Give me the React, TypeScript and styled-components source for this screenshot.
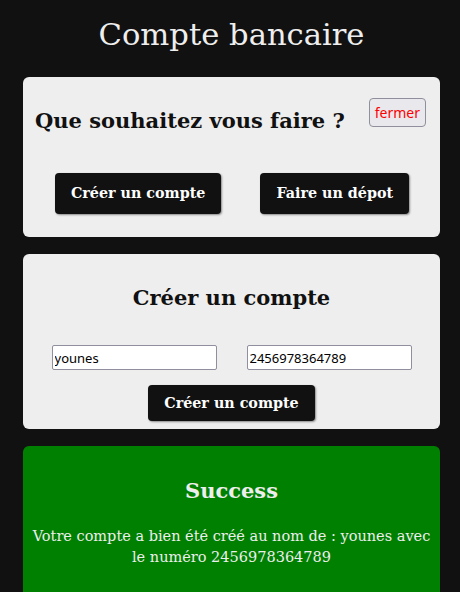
import React from "react";
import styled, { createGlobalStyle } from "styled-components";

const GlobalStyle = createGlobalStyle`
  html, body {
    margin: 0;
    padding: 0;
    background: #111111;
  }
  body {
    font-family: "DejaVu Serif", serif;
  }
  * { box-sizing: border-box; }
`;

const Page = styled.div`
  padding: 15px 20px 0 23px;
  display: flex;
  flex-direction: column;
  color: #eeeeee;
`;

const Title = styled.h1`
  margin: 0 0 22px;
  font-family: "DejaVu Serif", serif;
  font-weight: normal;
  font-size: 30.6px;
  line-height: 40px;
  text-align: center;
  color: #eeeeee;
`;

const Card = styled.section<{ $tone?: "light" | "success" }>`
  background: ${(p) => (p.$tone === "success" ? "#008000" : "#eeeeee")};
  color: ${(p) => (p.$tone === "success" ? "#eeeeee" : "#111111")};
  border-radius: 6px;
  display: flex;
  flex-direction: column;
  margin-bottom: 17px;
`;

const MenuCard = styled(Card)`
  padding: 21px 14px 23px 12px;
`;

const FormCard = styled(Card)`
  padding: 28px 12px 8px;
  align-items: center;
`;

const SuccessCard = styled(Card)`
  padding: 29px 6px 30px;
  align-items: center;
  margin-bottom: 0;
`;

const Header = styled.div`
  display: flex;
  justify-content: space-between;
  align-items: flex-start;
`;

const Heading = styled.h2`
  margin: 0;
  font-family: "DejaVu Serif", serif;
  font-size: 21px;
  line-height: 32px;
  font-weight: 700;
`;

const MenuHeading = styled(Heading)`
  margin-top: 7px;
`;

const CloseButton = styled.button`
  font-family: "Noto Sans", sans-serif;
  font-size: 14px;
  line-height: 21px;
  color: #ff0000;
  background: #e9e9ed;
  border: 1px solid #8f8f9d;
  border-radius: 4px;
  padding: 3px 5px 3px;
  cursor: pointer;
`;

const ButtonRow = styled.div`
  display: flex;
  justify-content: center;
  gap: 39px;
  margin-top: 36px;
  padding-left: 3px;
`;

const DarkButton = styled.button<{ $tall?: boolean }>`
  font-family: "DejaVu Serif", serif;
  font-weight: 700;
  font-size: 14.3px;
  line-height: 21px;
  color: #ffffff;
  background: #111111;
  border: none;
  border-radius: 4px;
  box-shadow: 1px 1px 2px #8a8a8a;
  padding: ${(p) => (p.$tall ? "10px 16px" : "8px 16px 7px")};
  cursor: pointer;
`;

const InputRow = styled.div`
  display: flex;
  justify-content: center;
  gap: 30px;
  margin-top: 31px;
  margin-bottom: 15px;
`;

const Field = styled.input`
  width: 165px;
  height: 25px;
  font-family: "Noto Sans", sans-serif;
  font-size: 13px;
  color: #000000;
  background: #ffffff;
  border: 1px solid #8f8f9d;
  border-radius: 2px;
  padding: 1px 2px;
  outline: none;
`;

const Message = styled.p`
  margin: 19px 0 0;
  font-family: "DejaVu Serif", serif;
  font-size: 14.5px;
  line-height: 21px;
  text-align: center;
`;

export default function App() {
  return (
    <>
      <GlobalStyle />
      <Page>
        <Title>Compte bancaire</Title>

        <MenuCard>
          <Header>
            <MenuHeading>Que souhaitez vous faire ?</MenuHeading>
            <CloseButton>fermer</CloseButton>
          </Header>
          <ButtonRow>
            <DarkButton $tall>Créer un compte</DarkButton>
            <DarkButton $tall>Faire un dépot</DarkButton>
          </ButtonRow>
        </MenuCard>

        <FormCard>
          <Heading>Créer un compte</Heading>
          <InputRow>
            <Field defaultValue="younes" />
            <Field defaultValue="2456978364789" />
          </InputRow>
          <DarkButton>Créer un compte</DarkButton>
        </FormCard>

        <SuccessCard $tone="success">
          <Heading>Success</Heading>
          <Message>
            Votre compte a bien été créé au nom de : younes avec le numéro
            2456978364789
          </Message>
        </SuccessCard>
      </Page>
    </>
  );
}
